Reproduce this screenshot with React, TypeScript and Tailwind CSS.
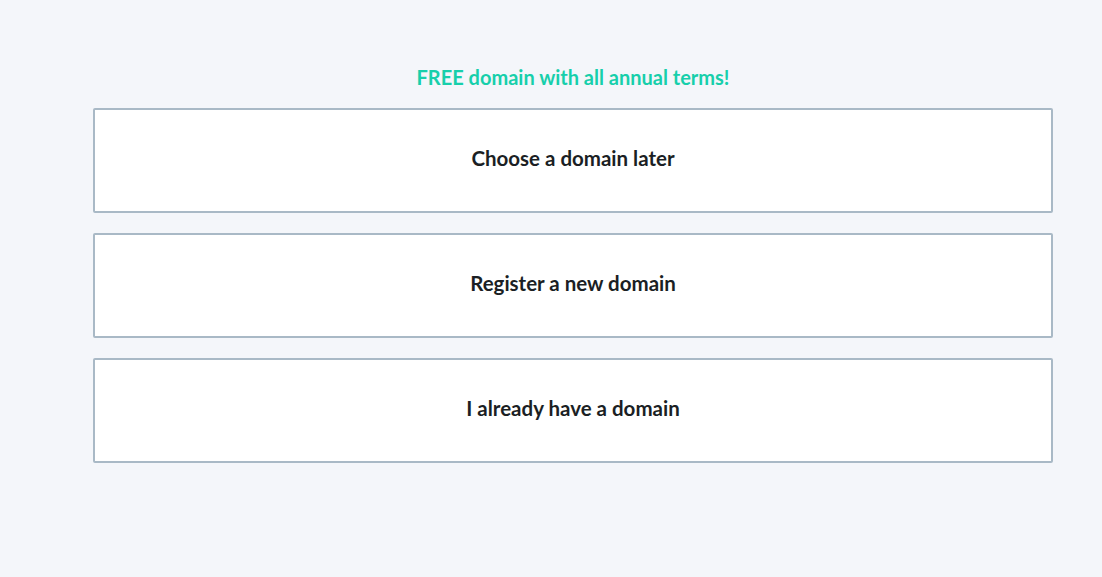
import React from 'react';

const OPTIONS = ['Choose a domain later', 'Register a new domain', 'I already have a domain'];

export default function App() {
  return (
    <div className="min-h-[577px] w-full bg-[#f4f6fa] pt-[65px]" style={{ fontFamily: 'Lato, "Noto Sans", sans-serif' }}>
      <div className="ml-[93px] flex w-[960px] flex-col">
        <div className="text-center text-[20px] leading-[24px] font-bold text-[#17cfab]">
          FREE domain with all annual terms!
        </div>
        <div className="mt-[19px] flex flex-col gap-[20px]">
          {OPTIONS.map(o => (
            <button
              key={o}
              className="flex h-[105px] items-center justify-center rounded-[2px] border-2 border-[#a9b9c6] bg-white pb-[4px] text-[20.5px] font-bold text-[#1b1f24]"
            >
              {o}
            </button>
          ))}
        </div>
      </div>
    </div>
  );
}
